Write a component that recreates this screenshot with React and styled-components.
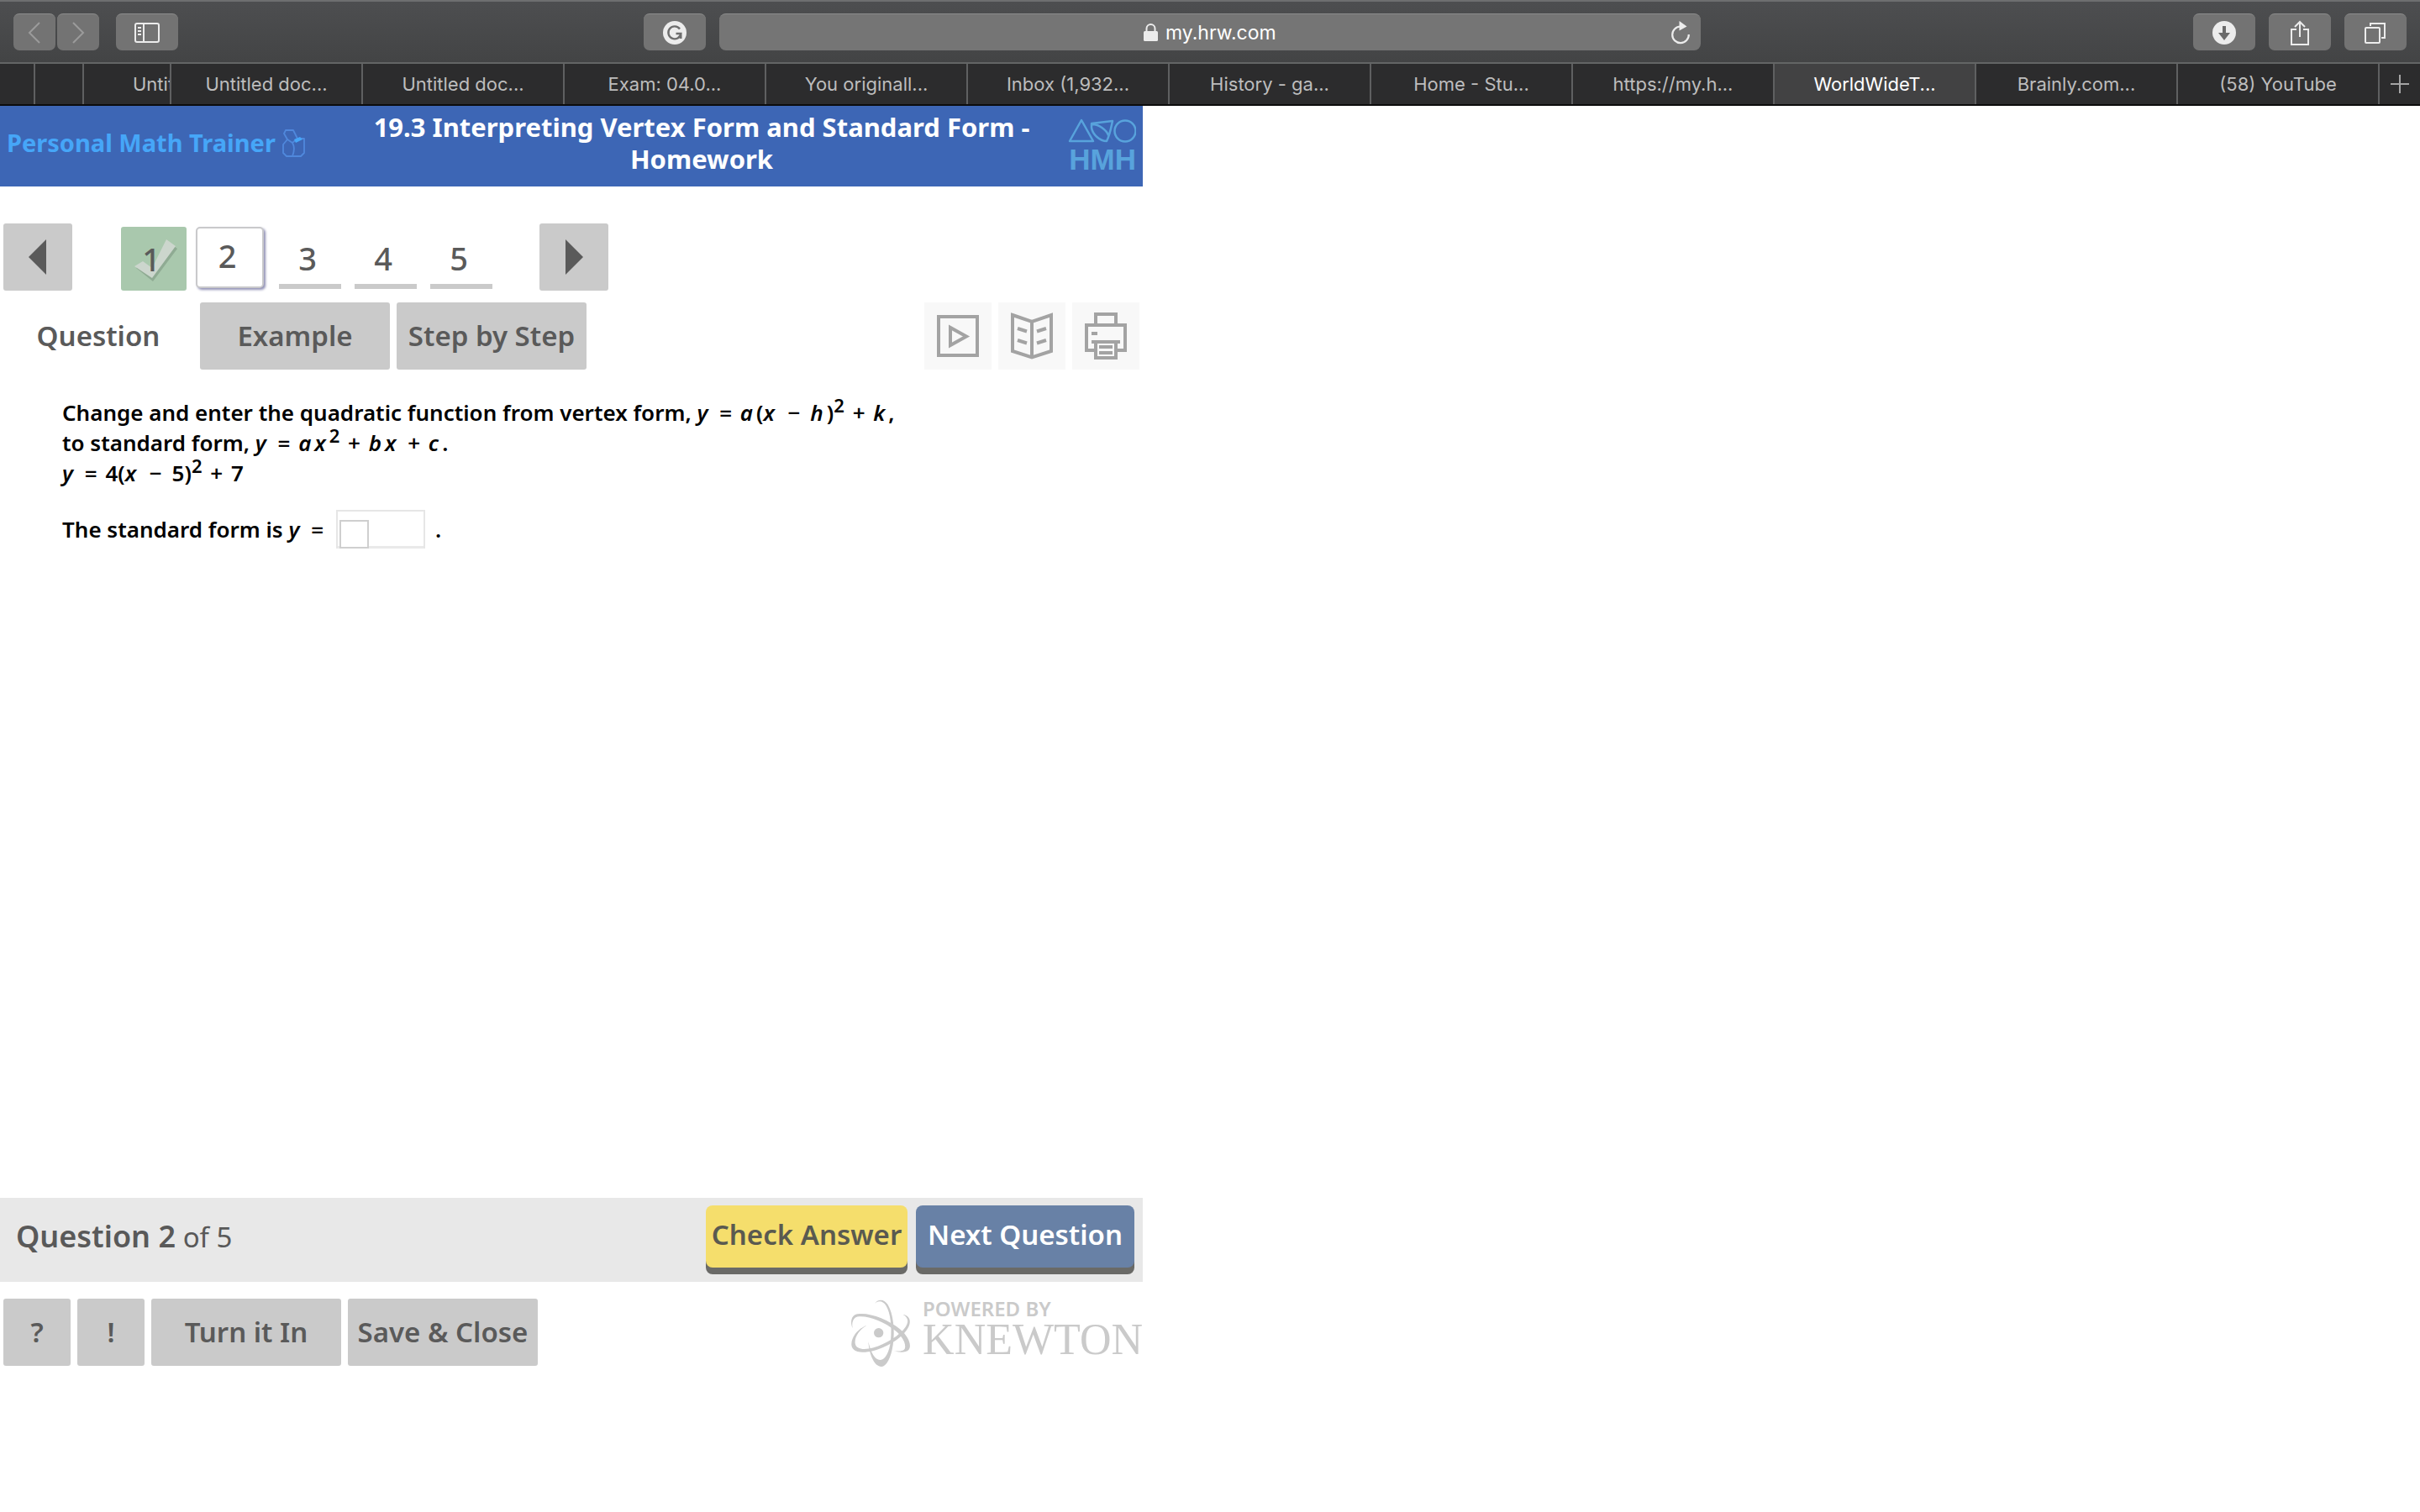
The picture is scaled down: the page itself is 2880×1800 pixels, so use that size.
import React from "react";
import styled, { createGlobalStyle, css } from "styled-components";

const sans = '"Noto Sans", "Open Sans", sans-serif';
const chromeFont = 'Inter, "Liberation Sans", sans-serif';

const GlobalStyle = createGlobalStyle`
  *, *::before, *::after { box-sizing: border-box; }
  body { margin: 0; background: #fff; font-family: ${sans}; }
  button, input { margin: 0; padding: 0; border: 0; font-family: inherit; }
  svg { display: block; flex: none; }
`;

const Page = styled.div`
  display: flex;
  flex-direction: column;
  min-height: 100vh;
`;

/* ---------- browser chrome ---------- */

const Toolbar = styled.header`
  display: flex;
  align-items: center;
  gap: 16px;
  height: 76px;
  padding: 0 16px;
  border-top: 2px solid #6e6f70;
  border-bottom: 2px solid #636565;
  background: linear-gradient(#4d4e50, #434445);
`;

const ToolSide = styled.div`
  display: flex;
  flex: 1;
  align-items: center;
  justify-content: ${(p) => (p.$end ? "flex-end" : "flex-start")};
  gap: 16px;
`;

const HistoryPair = styled.div`
  display: flex;
  gap: 2px;
  margin-right: 4px;
`;

const ToolButton = styled.button`
  display: flex;
  align-items: center;
  justify-content: center;
  width: ${(p) => (p.$narrow ? 50 : 74)}px;
  height: 44px;
  margin-left: ${(p) => (p.$push ? "auto" : "0")};
  border-top: 1px solid #8c8c8c;
  border-radius: 7px;
  background: #737373;
  color: ${(p) => (p.$dim ? "#9b9b9b" : "#ececec")};
`;

const Address = styled.label`
  display: flex;
  align-items: center;
  width: 41%;
  height: 44px;
  padding: 0 12px;
  border-top: 1px solid #8c8c8c;
  border-radius: 8px;
  background: #757575;
  color: #ececec;
`;

const AddressText = styled.div`
  display: flex;
  flex: 1;
  align-items: center;
  justify-content: center;
  gap: 9px;
  padding-left: 30px;
`;

const AddressInput = styled.input`
  width: 138px;
  background: none;
  color: #fff;
  font: 400 23px/32px ${chromeFont};
`;

const Reload = styled.button`
  background: none;
  color: #ececec;
`;

const TabBar = styled.nav`
  display: flex;
  height: 50px;
  border-bottom: 2px solid #0c0c0c;
  background: #2c2c2d;
`;

const BrowserTab = styled.button`
  flex: ${(p) => (p.$width ? `0 0 ${p.$width}px` : "1 1 0")};
  min-width: 0;
  padding-left: ${(p) => (p.$clipped ? 58 : 0)}px;
  overflow: hidden;
  border-left: ${(p) => (p.$first ? 0 : 2)}px solid #5f6061;
  background: ${(p) => (p.$active ? "#424243" : "#2c2c2d")};
  color: ${(p) => (p.$active ? "#fff" : "#bdbdbd")};
  font: 400 22px/48px ${chromeFont};
  text-align: ${(p) => (p.$clipped ? "left" : "center")};
  white-space: nowrap;
`;

const NewTab = styled(BrowserTab)`
  display: flex;
  align-items: center;
  justify-content: center;
`;

/* ---------- trainer ---------- */

const Trainer = styled.main`
  display: flex;
  flex: 1;
  flex-direction: column;
  width: 1360px;
  max-width: 100%;
  padding-bottom: 172px;
  color: #595959;
`;

const Banner = styled.header`
  display: grid;
  grid-template-columns: 400px 1fr 90px;
  align-items: center;
  padding: 6px 8px 14px;
  background: #3d66b5;
`;

const Brand = styled.a`
  display: flex;
  align-items: center;
  gap: 8px;
  color: #46a6f8;
  font-size: 29px;
  font-weight: 700;
  line-height: 38px;
  text-decoration: none;
`;

const Title = styled.h1`
  margin: 0;
  color: #fff;
  font-size: 31px;
  font-weight: 700;
  line-height: 38px;
  text-align: center;
`;

const Publisher = styled.div`
  display: flex;
  flex-direction: column;
  align-items: flex-end;
  gap: 2px;
  padding-top: 8px;
  color: #58a3dc;
  font: 700 35px/34px "Liberation Sans", Arial, sans-serif;
`;

const Pager = styled.nav`
  display: flex;
  align-items: flex-start;
  padding: 44px 4px 0;
`;

const PageStep = styled.button`
  display: flex;
  align-items: center;
  justify-content: center;
  width: 82px;
  height: 80px;
  border-radius: 3px;
  background: #cacaca;
  color: #5a5a5a;
`;

const Numbers = styled.div`
  display: flex;
  align-items: flex-start;
  gap: 16px;
  padding: 4px 56px 0 58px;
`;

const numberLooks = {
  done: css`
    width: 78px;
    height: 76px;
    border-radius: 3px;
    background: #a9c8ad;
  `,
  current: css`
    width: 81px;
    height: 73px;
    margin: 0 2px 0 -5px;
    padding-bottom: 6px;
    border: 2px solid #c9c9cb;
    border-radius: 5px;
    background: #fff;
    box-shadow: 2px 2px 3px #8f8fb4;
  `,
  open: css`
    width: 74px;
    height: 74px;
    padding-top: 6px;
    border-bottom: 6px solid #cacaca;
    background: none;
  `,
};

const NumberButton = styled.button`
  position: relative;
  padding: 0 6px 0 0;
  color: #5a5a5a;
  font-size: 38px;
  font-weight: 500;
  line-height: 52px;
  ${(p) => numberLooks[p.$look]}
`;

const NumberLabel = styled.span`
  position: relative;
`;

const CheckMark = styled.svg`
  position: absolute;
  inset: 0;
`;

const Modes = styled.nav`
  display: flex;
  gap: 8px;
  padding: 14px 4px 0;
`;

const Spacer = styled.span`
  flex: 1;
`;

const BlockButton = styled.button`
  width: ${(p) => (p.$small ? 80 : 226)}px;
  height: 80px;
  border-radius: 3px;
  background: ${(p) => (p.$plain ? "#fff" : "#cacaca")};
  color: #5a5a5a;
  font-size: 33px;
  font-weight: 600;
  line-height: 48px;
  white-space: nowrap;
`;

const IconButton = styled.button`
  width: 80px;
  height: 80px;
  background: #f8f8f8;
  color: #a3a3a3;
`;

const Problem = styled.section`
  flex: 1;
  padding: 33px 74px 0;
  color: #000;
  font-size: 26px;
  font-weight: 600;
  line-height: 36px;
`;

const Statement = styled.p`
  margin: 0;
`;

const Var = styled.i`
  margin-right: 4px;
`;

const Op = styled.span`
  margin: 0 ${(p) => (p.$wide ? 5 : 3)}px;
`;

const Power = styled.sup`
  font-size: 22px;
  line-height: 0;
  vertical-align: 10px;
`;

const AnswerLine = styled.div`
  display: flex;
  align-items: center;
  gap: 12px;
  margin-top: 26px;
`;

const AnswerBox = styled.span`
  display: flex;
  align-items: flex-end;
  width: 106px;
  height: 46px;
  padding-left: 2px;
  border: 2px solid #e6e6e6;
  border-bottom-width: 0;
  box-shadow: inset 0 -3px 0 #e9e9e9;
`;

const AnswerInput = styled.input`
  width: 35px;
  height: 34px;
  border: 2px solid #cfcfcf;
  background: #fff;
  font: 600 22px/28px ${sans};
`;

const ActionBar = styled.footer`
  display: flex;
  align-items: center;
  gap: 10px;
  padding: 9px 10px 17px 19px;
  background: #e8e8e8;
`;

const Progress = styled.p`
  flex: 1;
  margin: 0;
  font-size: 33px;
  line-height: 50px;
`;

const ProgressNow = styled.strong`
  font-size: 36px;
  font-weight: 600;
`;

const ActionButton = styled.button`
  width: ${(p) => (p.$primary ? 260 : 240)}px;
  height: 74px;
  padding-bottom: 4px;
  border-radius: 8px;
  box-shadow: 0 8px 0 #6a6a67;
  background: ${(p) => (p.$primary ? "#6881a6" : "#f5de6c")};
  color: ${(p) => (p.$primary ? "#fff" : "#5a5a50")};
  font-size: 33px;
  font-weight: 600;
  line-height: 48px;
  white-space: nowrap;
`;

const BottomBar = styled.div`
  display: flex;
  align-items: flex-start;
  gap: 8px;
  padding: 20px 0 0 4px;
`;

const Powered = styled.div`
  display: flex;
  gap: 14px;
  color: #cacaca;
`;

const PoweredBy = styled.div`
  font-size: 24px;
  font-weight: 600;
  line-height: 24px;
`;

const Knewton = styled.div`
  font: 400 52px/50px "Liberation Serif", serif;
`;

/* ---------- icons ---------- */

const Chevron = ({ flip }) => (
  <svg width="16" height="26" viewBox="0 0 16 26" fill="none" stroke="currentColor" strokeWidth="2">
    <path d={flip ? "M2 1l12 12L2 25" : "M14 1L2 13l12 12"} />
  </svg>
);

const SidebarIcon = () => (
  <svg width="30" height="24" viewBox="0 0 30 24" fill="none" stroke="currentColor" strokeWidth="2">
    <rect x="1" y="1" width="28" height="22" rx="2" />
    <path d="M11 1v22M4 6h4M4 10h4M4 14h4" />
  </svg>
);

const GrammarIcon = () => (
  <svg width="28" height="28" viewBox="0 0 28 28" fill="none">
    <circle cx="14" cy="14" r="14" fill="currentColor" />
    <path d="M20 9.500A7.500 7.500 0 1 0 21.300 15H15.500M21.300 15v6" stroke="#6d6d6d" strokeWidth="2.400" />
  </svg>
);

const LockIcon = () => (
  <svg width="17" height="21" viewBox="0 0 17 21" fill="none">
    <rect x="0" y="9" width="17" height="12" rx="1.500" fill="currentColor" />
    <path d="M3.500 10V6a5 5 0 0 1 10 0v4" stroke="currentColor" strokeWidth="2" />
  </svg>
);

const ReloadIcon = () => (
  <svg width="24" height="28" viewBox="0 0 24 28" fill="none">
    <path d="M12 6.500A9.800 9.800 0 1 0 21.800 16" stroke="currentColor" strokeWidth="2.200" />
    <path d="M10.500 0l9 6.500-9 5z" fill="currentColor" />
  </svg>
);

const DownloadIcon = () => (
  <svg width="28" height="28" viewBox="0 0 28 28">
    <circle cx="14" cy="14" r="14" fill="currentColor" />
    <path d="M12 6h4v8h5l-7 9-7-9h5z" fill="#6b6b6b" />
  </svg>
);

const ShareIcon = () => (
  <svg width="24" height="30" viewBox="0 0 24 30" fill="none" stroke="currentColor" strokeWidth="2">
    <path d="M8 11H2v18h20V11h-6M12 20V2M6 8l6-6 6 6" />
  </svg>
);

const TabsIcon = () => (
  <svg width="26" height="26" viewBox="0 0 26 26" fill="none" stroke="currentColor" strokeWidth="2">
    <rect x="1" y="7" width="17" height="18" rx="1" />
    <path d="M7 5V2h17v17h-4" />
  </svg>
);

const PlusIcon = () => (
  <svg width="22" height="22" viewBox="0 0 22 22" stroke="#a5a5a5" strokeWidth="2">
    <path d="M11 0v22M0 11h22" />
  </svg>
);

const WhistleIcon = () => (
  <svg width="27" height="33" viewBox="0 0 27 33" fill="none" stroke="#5088dc" strokeWidth="1.800" strokeLinejoin="round">
    <path d="M4 1h9l5 10h8v17l-4 4H5l-4-4V18l5-6-4-7z" />
    <path d="M6 12l6 4c3 5 2 11 0 16M12 16l6-5" />
    <path d="M14 12l7-3 3 3-8 4z" fill="#46a6f8" stroke="none" />
  </svg>
);

const ShapesIcon = () => (
  <svg width="81" height="30" viewBox="0 0 81 30" fill="none" stroke="currentColor" strokeWidth="2.500" strokeLinejoin="round">
    <path d="M16 2L30 27H2z" />
    <path d="M28 6L53 3C51 12 50 19 46 27C38 27 29 19 28 11zM29 7C37 7 46 14 48 20" />
    <circle cx="68" cy="15" r="12.500" />
  </svg>
);

const Arrow = ({ next }) => (
  <svg width="22" height="42" viewBox="0 0 22 42" fill="currentColor">
    <path d={next ? "M1 0v42l21-21z" : "M21 0v42L0 21z"} />
  </svg>
);

const Play = () => (
  <svg width="80" height="80" viewBox="0 0 80 80" fill="none" stroke="currentColor" strokeWidth="4">
    <rect x="17" y="17" width="46" height="46" />
    <path d="M31 30v21l19-10.500z" />
  </svg>
);

const Book = () => (
  <svg width="80" height="80" viewBox="0 0 80 80" fill="none" stroke="currentColor" strokeWidth="4">
    <path d="M17 15l23 8 23-8v43l-23 7.500L17 58zM40 23v42" />
    <path d="M23 31l11 3.500M23 45l11 3.500M57 31l-11 3.500M57 45l-11 3.500" />
  </svg>
);

const Printer = () => (
  <svg width="80" height="80" viewBox="0 0 80 80" fill="none" stroke="currentColor" strokeWidth="4">
    <path d="M28 27V14h24v13" />
    <path d="M28 57H17V27h46v30H52" />
    <path d="M23 37h7M23 47h34M28 47v19h24V47M32 53h16M32 60h16" />
  </svg>
);

const Atom = () => (
  <svg width="72" height="82" viewBox="69 54 216 246" fill="currentColor">
    <circle cx="170" cy="176" r="17" />
    <path d="M155 72C168 54 190 54 203 76C222 108 229 168 221 220C214 266 198 297 180 297C156 297 137 258 133 208C143 250 158 274 176 273C194 272 208 246 213 204C218 155 212 104 197 80C187 63 170 58 155 72z" />
    <path d="M77 160C67 138 72 112 95 109C135 102 205 128 246 163C278 190 289 222 277 237C268 247 245 247 224 241C248 243 262 240 264 230C268 212 252 187 230 169C190 136 135 115 100 118C78 120 73 138 77 160z" />
    <path d="M128 149C100 166 84 190 86 213C89 236 118 238 152 229C196 216 246 184 266 155C279 136 275 121 257 111C278 113 287 131 278 152C262 188 208 224 155 239C108 251 76 246 73 220C71 193 94 162 128 149z" />
  </svg>
);

/* ---------- page ---------- */

const openTabs = [
  { label: "", width: 40, first: true },
  { label: "", width: 58 },
  { label: "Untit", width: 104, clipped: true },
  { label: "Untitled doc...", width: 228 },
  { label: "Untitled doc..." },
  { label: "Exam: 04.0..." },
  { label: "You originall..." },
  { label: "Inbox (1,932..." },
  { label: "History - ga..." },
  { label: "Home - Stu..." },
  { label: "https://my.h..." },
  { label: "WorldWideT...", active: true },
  { label: "Brainly.com..." },
  { label: "(58) YouTube" },
];

const questions = [
  { n: 1, look: "done" },
  { n: 2, look: "current" },
  { n: 3, look: "open" },
  { n: 4, look: "open" },
  { n: 5, look: "open" },
];

export default function App() {
  return (
    <Page>
      <GlobalStyle />
      <Toolbar>
        <ToolSide>
          <HistoryPair>
            <ToolButton $narrow $dim aria-label="Back"><Chevron /></ToolButton>
            <ToolButton $narrow $dim aria-label="Forward"><Chevron flip /></ToolButton>
          </HistoryPair>
          <ToolButton aria-label="Sidebar"><SidebarIcon /></ToolButton>
          <ToolButton $push aria-label="Grammar extension"><GrammarIcon /></ToolButton>
        </ToolSide>
        <Address>
          <AddressText>
            <LockIcon />
            <AddressInput type="text" aria-label="Address" defaultValue="my.hrw.com" />
          </AddressText>
          <Reload type="button" aria-label="Reload"><ReloadIcon /></Reload>
        </Address>
        <ToolSide $end>
          <ToolButton aria-label="Downloads"><DownloadIcon /></ToolButton>
          <ToolButton aria-label="Share"><ShareIcon /></ToolButton>
          <ToolButton aria-label="Show tabs"><TabsIcon /></ToolButton>
        </ToolSide>
      </Toolbar>
      <TabBar>
        {openTabs.map((t, i) => (
          <BrowserTab
            key={i}
            $first={t.first}
            $width={t.width}
            $clipped={t.clipped}
            $active={t.active}
            aria-label={t.label ? undefined : "Collapsed tab"}
          >
            {t.label}
          </BrowserTab>
        ))}
        <NewTab $width={50} aria-label="New tab"><PlusIcon /></NewTab>
      </TabBar>

      <Trainer>
        <Banner>
          <Brand href="#home">Personal Math Trainer<WhistleIcon /></Brand>
          <Title>19.3 Interpreting Vertex Form and Standard Form - Homework</Title>
          <Publisher><ShapesIcon />HMH</Publisher>
        </Banner>

        <Pager>
          <PageStep aria-label="Previous question"><Arrow /></PageStep>
          <Numbers>
            {questions.map((q) => (
              <NumberButton key={q.n} $look={q.look}>
                {q.look === "done" && (
                  <CheckMark width="78" height="76" viewBox="0 0 78 76">
                    <path d="M18 49l10-6 10 8L56 18l11 8-29 39z" fill="#8fab93" />
                    <path d="M16 47l10-6 11 8L54 15l11 8-28 38z" fill="#ccd6cd" />
                  </CheckMark>
                )}
                <NumberLabel>{q.n}</NumberLabel>
              </NumberButton>
            ))}
          </Numbers>
          <PageStep aria-label="Next page"><Arrow next /></PageStep>
        </Pager>

        <Modes>
          <BlockButton $plain>Question</BlockButton>
          <BlockButton>Example</BlockButton>
          <BlockButton>Step by Step</BlockButton>
          <Spacer />
          <IconButton aria-label="Video"><Play /></IconButton>
          <IconButton aria-label="Textbook"><Book /></IconButton>
          <IconButton aria-label="Print"><Printer /></IconButton>
        </Modes>

        <Problem>
          <Statement>
            Change and enter the quadratic function from vertex form, <Var>y</Var> <Op>=</Op> <Var>a</Var>(<Var>x</Var> <Op $wide>−</Op> <Var>h</Var>)<Power>2</Power> <Op>+</Op> <Var>k</Var>,
          </Statement>
          <Statement>
            to standard form, <Var>y</Var> <Op>=</Op> <Var>a</Var><Var>x</Var><Power>2</Power> <Op>+</Op> <Var>b</Var><Var>x</Var> <Op>+</Op> <Var>c</Var>.
          </Statement>
          <Statement>
            <Var>y</Var> <Op>=</Op> 4(<Var>x</Var> <Op $wide>−</Op> 5)<Power>2</Power> <Op>+</Op> 7
          </Statement>
          <AnswerLine>
            <label htmlFor="answer">The standard form is <Var>y</Var> <Op>=</Op></label>
            <AnswerBox><AnswerInput id="answer" type="text" /></AnswerBox>
            <span>.</span>
          </AnswerLine>
        </Problem>

        <ActionBar>
          <Progress><ProgressNow>Question 2</ProgressNow> of 5</Progress>
          <ActionButton>Check Answer</ActionButton>
          <ActionButton $primary>Next Question</ActionButton>
        </ActionBar>

        <BottomBar>
          <BlockButton $small>?</BlockButton>
          <BlockButton $small>!</BlockButton>
          <BlockButton>Turn it In</BlockButton>
          <BlockButton>Save &amp; Close</BlockButton>
          <Spacer />
          <Powered>
            <Atom />
            <div>
              <PoweredBy>POWERED BY</PoweredBy>
              <Knewton>KNEWTON</Knewton>
            </div>
          </Powered>
        </BottomBar>
      </Trainer>
    </Page>
  );
}
